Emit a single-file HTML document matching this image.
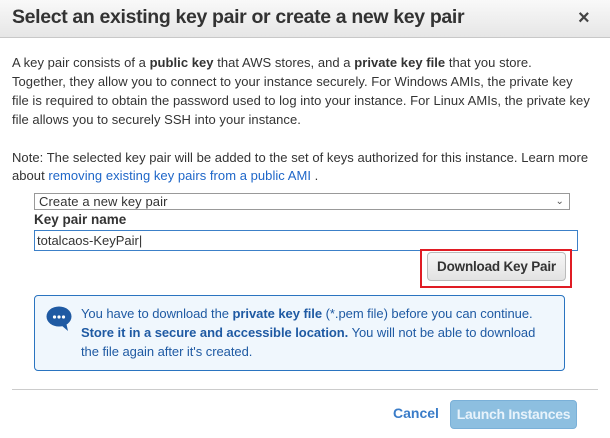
<!DOCTYPE html>
<html><head><style>
*{margin:0;padding:0;box-sizing:border-box}
body{width:610px;height:438px;background:#fff;font-family:"Liberation Sans",Arial,sans-serif;color:#333;position:relative;overflow:hidden;font-size:13px}
.hdr{position:absolute;left:0;top:0;width:610px;height:38px;background:linear-gradient(#f9f9f9,#e6e6e6);border-bottom:1px solid #c8c8c8}
.hdr h1{position:absolute;left:12px;top:6px;font-size:19.5px;font-weight:bold;color:#333;letter-spacing:-0.35px;white-space:nowrap}
.x{position:absolute;left:578px;top:7px;font-size:20px;color:#444;font-weight:bold}
.t{position:absolute;left:12px;white-space:nowrap;font-size:13px;letter-spacing:0.04px;line-height:19px}
a{color:#1e66c8;text-decoration:none}
.sel{position:absolute;left:34px;top:193px;width:536px;height:17px;border:1px solid #999;font-size:13px;padding-left:4px;line-height:15px;letter-spacing:0.1px}
.sel span{position:absolute;right:5px;top:0;font-size:10px;color:#555}
.lbl{position:absolute;left:34px;top:212px;font-weight:bold;font-size:13.5px}
.inp{position:absolute;left:34px;top:230px;width:544px;height:21px;border:1px solid #3c80c8;padding-left:2px;line-height:19px}
.red{position:absolute;left:420px;top:249px;width:152px;height:39px;border:2px solid #e01c24}
.btn{position:absolute;left:427px;top:252px;width:139px;height:29px;border:1px solid #bbb;border-radius:4px;background:linear-gradient(#f7f7f7,#e2e2e2);font-weight:bold;text-align:center;line-height:27px;font-size:13.5px;letter-spacing:-0.2px}
.info{position:absolute;left:34px;top:295px;width:531px;height:76px;border:1px solid #2a74c0;border-radius:4px;background:#f0f7fd}
.info .t{left:46px;color:#1f5aa3;letter-spacing:-0.05px}
.sep{position:absolute;left:12px;top:389px;width:586px;height:1px;background:#ccc}
.cancel{position:absolute;left:393px;top:405px;color:#3a7cc8;font-weight:bold;font-size:14px}
.launch{position:absolute;left:450px;top:400px;width:127px;height:29px;border-radius:4px;background:#8dbfe0;border:1px solid #7ab0d8;color:#e8f3fb;font-weight:bold;text-align:center;line-height:27px;font-size:14px;letter-spacing:-0.3px}
</style></head><body>
<div class="hdr"><h1>Select an existing key pair or create a new key pair</h1><div class="x">×</div></div>
<div class="t" style="top:53px">A key pair consists of a <b>public key</b> that AWS stores, and a <b>private key file</b> that you store.</div>
<div class="t" style="top:72px">Together, they allow you to connect to your instance securely. For Windows AMIs, the private key</div>
<div class="t" style="top:91px">file is required to obtain the password used to log into your instance. For Linux AMIs, the private key</div>
<div class="t" style="top:110px">file allows you to securely SSH into your instance.</div>
<div class="t" style="top:148px">Note: The selected key pair will be added to the set of keys authorized for this instance. Learn more</div>
<div class="t" style="top:166px">about <a>removing existing key pairs from a public AMI</a> .</div>
<div class="sel">Create a new key pair<span>&#8964;</span></div>
<div class="lbl">Key pair name</div>
<div class="inp">totalcaos-KeyPair|</div>
<div class="red"></div>
<div class="btn">Download Key Pair</div>
<div class="info">
<svg style="position:absolute;left:11px;top:10px" width="28" height="26" viewBox="0 0 28 26"><ellipse cx="13" cy="10.5" rx="12.5" ry="10" fill="#1f5aa3"/><path d="M15 19 L22 25 L20 16 Z" fill="#1f5aa3"/><circle cx="8.5" cy="11" r="1.6" fill="#fff"/><circle cx="13" cy="11" r="1.6" fill="#fff"/><circle cx="17.5" cy="11" r="1.6" fill="#fff"/></svg>
<div class="t" style="top:8px">You have to download the <b>private key file</b> (*.pem file) before you can continue.</div>
<div class="t" style="top:27px"><b>Store it in a secure and accessible location.</b> You will not be able to download</div>
<div class="t" style="top:46px">the file again after it's created.</div>
</div>
<div class="sep"></div>
<div class="cancel">Cancel</div>
<div class="launch">Launch Instances</div>
</body></html>
